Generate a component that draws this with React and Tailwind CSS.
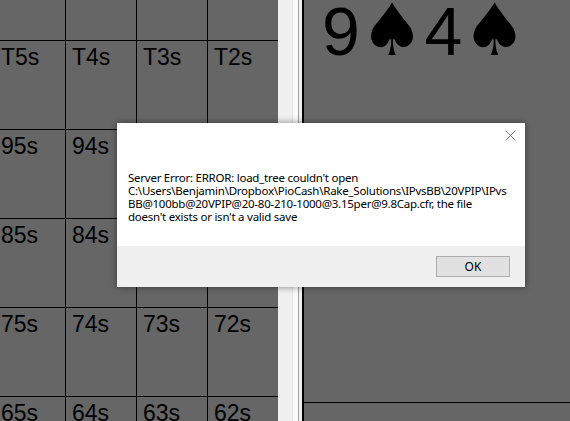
import React from 'react';

const rows = [
    ['', '', '', ''],
    ['T5s', 'T4s', 'T3s', 'T2s'],
    ['95s', '94s', '93s', '92s'],
    ['85s', '84s', '83s', '82s'],
    ['75s', '74s', '73s', '72s'],
    ['65s', '64s', '63s', '62s'],
];

function RangeGrid() {
    return (
        <div className="w-[278px] h-full shrink-0 overflow-hidden">
            <div className="-ml-[5px] -mt-[48px] grid grid-cols-[71px_71px_71px_70px]">
                {rows.flat().map((hand, i) => (
                    <div
                        key={i}
                        className={`h-[89px] border-b border-black pl-[6px] pt-[5px] text-[23px] leading-none text-black ${i % 4 === 3 ? '' : 'border-r'}`}
                        style={{ fontFamily: '"Liberation Sans", Arial, sans-serif' }}
                    >
                        {hand}
                    </div>
                ))}
            </div>
        </div>
    );
}

function Splitter() {
    return (
        <div className="flex h-full shrink-0">
            <div className="w-[14px] bg-[#f0f0f0]" />
            <div className="w-px bg-[#e3e3e3]" />
            <div className="w-[5px] bg-[#fafafa]" />
            <div className="w-px bg-[#a0a0a0]" />
            <div className="w-[3px] bg-[#f0f0f0]" />
        </div>
    );
}

function Spade() {
    return (
        <span className="text-[72px]" style={{ fontFamily: '"DejaVu Sans", sans-serif' }}>♠</span>
    );
}

function ErrorDialog() {
    return (
        <div
            className="absolute left-[117px] top-[123px] w-[408px] h-[164px] flex flex-col bg-white shadow-[0_0_7px_rgba(0,0,0,0.45)]"
            style={{ fontFamily: '"Noto Sans", "Open Sans", sans-serif' }}
        >
            <div className="relative h-[123px] bg-white">
                <svg className="absolute left-[388px] top-[7px]" width="11" height="11" viewBox="0 0 11 11">
                    <path d="M0.5 0.5 L10.5 10.5 M10.5 0.5 L0.5 10.5" stroke="#767676" strokeWidth="1" />
                </svg>
                <div className="pt-[48px] pl-[11px] text-[11.5px] tracking-[-0.25px] leading-[13px] text-black whitespace-nowrap">
                    Server Error: ERROR: load_tree couldn't open<br />
                    C:\Users\Benjamin\Dropbox\PioCash\Rake_Solutions\IPvsBB\20VPIP\IPvs<br />
                    BB@100bb@20VPIP@20-80-210-1000@3.15per@9.8Cap.cfr, the file<br />
                    doesn't exists or isn't a valid save
                </div>
            </div>
            <div className="flex-1 flex justify-end items-start pt-[10px] pr-[15px] bg-[#f0f0f0]">
                <button className="w-[74px] h-[21px] border border-[#adadad] bg-[#e1e1e1] text-[12px] leading-none text-black">
                    OK
                </button>
            </div>
        </div>
    );
}

export default function App() {
    return (
        <div className="relative w-[570px] h-[421px] overflow-hidden flex bg-[#666666]">
            <RangeGrid />
            <Splitter />
            <div className="flex-1 flex flex-col border-l-2 border-black bg-[#666666]">
                <div
                    className="h-[409px] shrink-0 border-b border-black pl-[18px] -mt-[6px] text-[68px] leading-none text-black whitespace-nowrap"
                    style={{ fontFamily: '"Liberation Sans", Arial, sans-serif' }}
                >
                    9<Spade />4<Spade />
                </div>
            </div>
            <ErrorDialog />
        </div>
    );
}
